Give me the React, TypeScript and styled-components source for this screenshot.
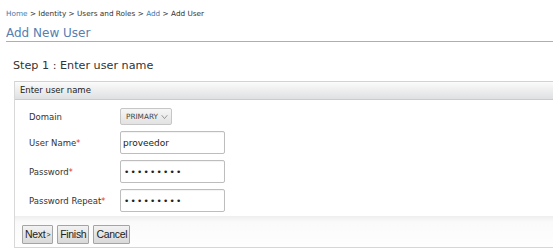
import React from "react";
import styled, { createGlobalStyle } from "styled-components";

const Global = createGlobalStyle`
  html, body { margin: 0; padding: 0; background: #fff; overflow: hidden; }
  body { font-family: "DejaVu Sans", Verdana, sans-serif; color: #333; }
`;

const Page = styled.div`
  padding-left: 6px;
  width: 547px;
`;

const Crumbs = styled.div`
  margin-top: 8px;
  height: 11px;
  font-size: 7.3px;
  line-height: 11px;
  color: #333;
  white-space: nowrap;
`;

const CrumbLink = styled.span`
  color: #4a78ab;
`;

const Title = styled.h1`
  margin: 6px 0 0 0;
  height: 16px;
  font-size: 12px;
  line-height: 16px;
  font-weight: normal;
  color: #5580b0;
  border-bottom: 1px solid #a9aeb9;
`;

const Step = styled.div`
  margin: 17px 0 0 7px;
  height: 14px;
  font-size: 11.2px;
  line-height: 14px;
  color: #333;
`;

const Box = styled.div`
  margin: 8px 0 0 8px;
  border-top: 1px solid #d2d2d2;
  border-left: 1px solid #d8d8d8;
  width: 560px;
`;

const BoxHeader = styled.div`
  height: 17px;
  line-height: 17px;
  padding-left: 5px;
  font-size: 8.5px;
  color: #222;
  background: linear-gradient(#fbfbfb, #dfe0e2);
  border-bottom: 1px solid #cbcbcb;
`;

const Form = styled.div`
  display: grid;
  grid-template-columns: 91px 1fr;
  grid-template-rows: 17px 23px 23px 23px;
  row-gap: 6px;
  padding: 8px 0 4px 14px;
  align-items: center;
`;

const Label = styled.div`
  font-size: 8.5px;
  color: #333;
  white-space: nowrap;
`;

const Req = styled.span`
  color: #e0302a;
  font-size: 8px;
`;

const Select = styled.div`
  display: inline-flex;
  align-items: center;
  gap: 3px;
  width: 52px;
  box-sizing: border-box;
  height: 17px;
  padding: 0 3px 0 5px;
  border: 1px solid #c6c6c6;
  border-radius: 2px;
  background: linear-gradient(#f6f6f6, #e2e2e2);
  font-size: 7.3px;
  color: #444;
  justify-self: start;
`;

const Input = styled.div`
  width: 105px;
  height: 23px;
  box-sizing: border-box;
  border: 1px solid #bdbdbd;
  border-radius: 2px;
  padding-left: 2px;
  display: flex;
  align-items: center;
  font-size: 9px;
  color: #222;
  background: #fff;
  box-shadow: inset 0 1px 1px rgba(0, 0, 0, 0.05);
`;

const Dots = styled.span`
  font-size: 9px;
  letter-spacing: 1.2px;
  padding-left: 1px;
  color: #222;
`;

const ButtonBar = styled.div`
  display: flex;
  gap: 4px;
  padding: 9px 0 3px 7px;
  background: linear-gradient(#eeeeee 0px, #fafafa 6px, #fefefe 100%);
  border-bottom: 1px solid #d6d6d6;
`;

const Button = styled.button`
  height: 19px;
  padding: 0 2px;
  margin: 0;
  border: 1px solid #a4a4a4;
  border-radius: 1px;
  background: linear-gradient(#f2f2f2, #d9d9d9);
  font-family: "Liberation Sans", Arial, sans-serif;
  font-size: 10.5px;
  letter-spacing: -0.3px;
  color: #222;
  line-height: 17px;
`;

const Arrow = styled.span`
  font-size: 7px;
  margin-left: 1px;
  vertical-align: 1px;
`;

const Chevron = () => (
  <svg width="8" height="6" viewBox="0 0 8 6">
    <path d="M0.8 1 L4 4.8 L7.2 1" fill="none" stroke="#8a8a8a" strokeWidth="1" />
  </svg>
);

export default function App() {
  return (
    <Page>
      <Global />
      <Crumbs>
        <CrumbLink>Home</CrumbLink> &gt; Identity &gt; Users and Roles &gt; <CrumbLink>Add</CrumbLink> &gt; Add User
      </Crumbs>
      <Title>Add New User</Title>
      <Step>Step 1 : Enter user name</Step>
      <Box>
        <BoxHeader>Enter user name</BoxHeader>
        <Form>
          <Label>Domain</Label>
          <Select>
            PRIMARY <Chevron />
          </Select>
          <Label>
            User Name<Req>*</Req>
          </Label>
          <Input>proveedor</Input>
          <Label>
            Password<Req>*</Req>
          </Label>
          <Input>
            <Dots>•••••••••</Dots>
          </Input>
          <Label>
            Password Repeat<Req>*</Req>
          </Label>
          <Input>
            <Dots>•••••••••</Dots>
          </Input>
        </Form>
        <ButtonBar>
          <Button>
            Next<Arrow>&gt;</Arrow>
          </Button>
          <Button>Finish</Button>
          <Button>Cancel</Button>
        </ButtonBar>
      </Box>
    </Page>
  );
}
